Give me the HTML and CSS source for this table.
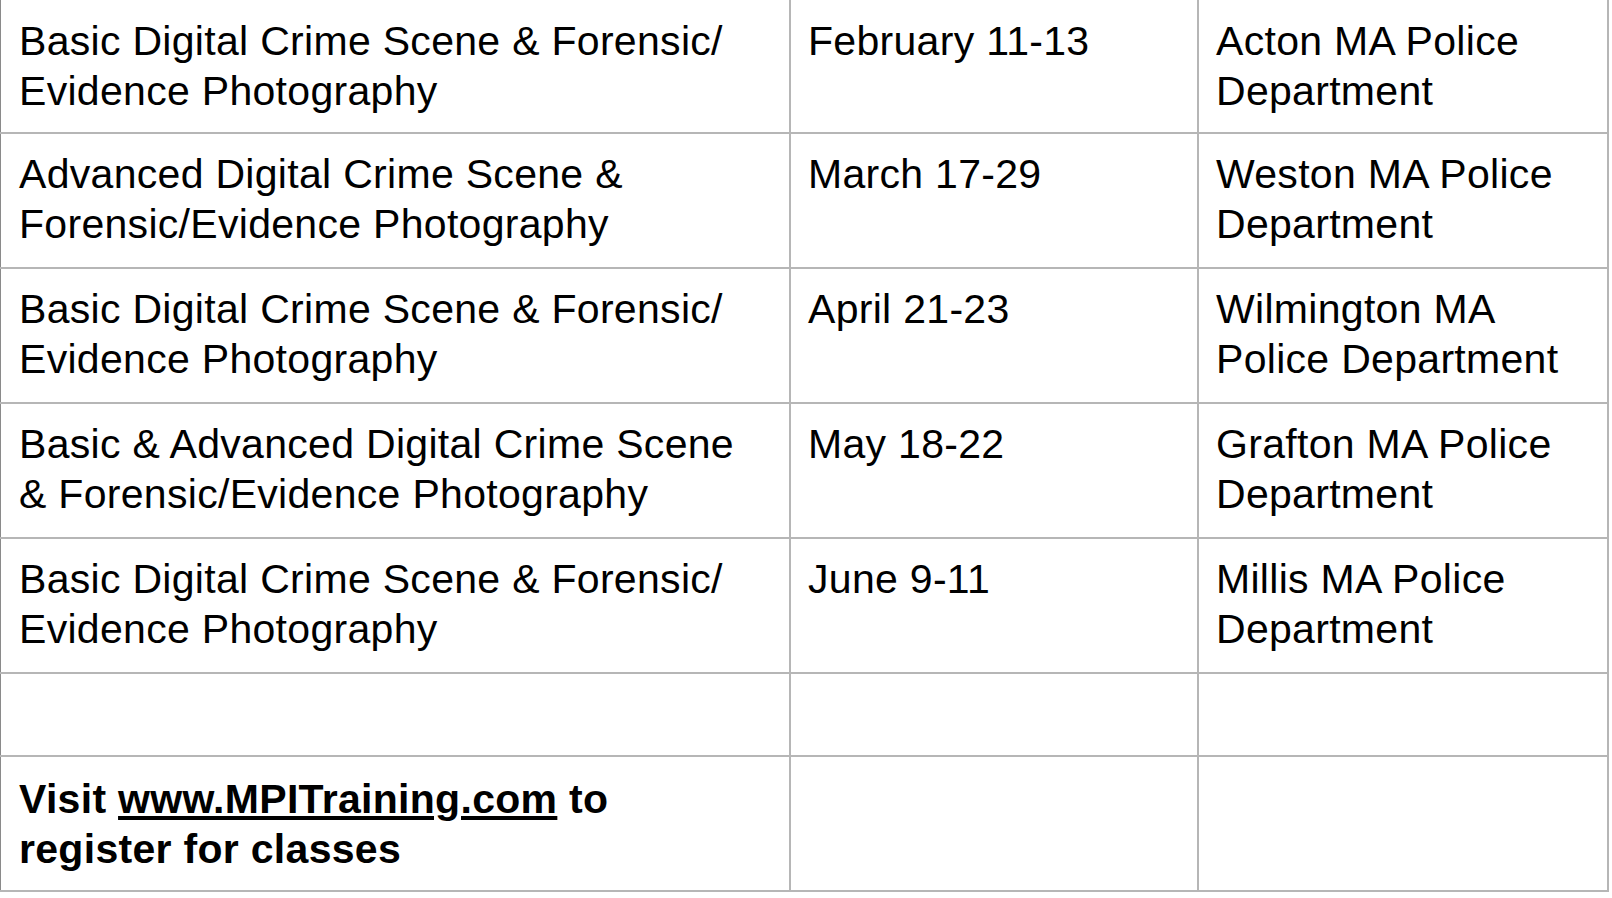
FILE: index.html
```html
<!DOCTYPE html>
<html>
<head>
<meta charset="utf-8">
<link rel="stylesheet" href="styles.css">
</head>
<body>
<table class="schedule">
  <colgroup>
    <col class="c-course">
    <col class="c-date">
    <col class="c-place">
  </colgroup>
  <tr class="first">
    <td>Basic Digital Crime Scene &amp; Forensic/ Evidence Photography</td>
    <td>February 11-13</td>
    <td>Acton MA Police Department</td>
  </tr>
  <tr>
    <td>Advanced Digital Crime Scene &amp; Forensic/Evidence Photography</td>
    <td>March 17-29</td>
    <td>Weston MA Police Department</td>
  </tr>
  <tr>
    <td>Basic Digital Crime Scene &amp; Forensic/ Evidence Photography</td>
    <td>April 21-23</td>
    <td>Wilmington MA Police Department</td>
  </tr>
  <tr>
    <td>Basic &amp; Advanced Digital Crime Scene &amp; Forensic/Evidence Photography</td>
    <td>May 18-22</td>
    <td>Grafton MA Police Department</td>
  </tr>
  <tr>
    <td>Basic Digital Crime Scene &amp; Forensic/ Evidence Photography</td>
    <td>June 9-11</td>
    <td>Millis MA Police Department</td>
  </tr>
  <tr class="empty">
    <td>&nbsp;</td>
    <td>&nbsp;</td>
    <td>&nbsp;</td>
  </tr>
  <tr class="cta">
    <td><strong>Visit <a href="#">www.MPITraining.com</a> to register for classes</strong></td>
    <td>&nbsp;</td>
    <td>&nbsp;</td>
  </tr>
</table>
</body>
</html>
```

FILE: styles.css
```css
html, body {
  margin: 0;
  padding: 0;
  background: #ffffff;
}

body {
  font-family: "Liberation Sans", Arial, Helvetica, sans-serif;
  color: #000000;
  overflow: hidden;
}

.schedule {
  border-collapse: collapse;
  table-layout: fixed;
  width: 1610px;
  margin: -2px 0 0 -1px;
}

.c-course { width: 790px; }
.c-date { width: 408px; }
.c-place { width: 410px; }

.schedule td {
  border: 2px solid #b6b6b6;
  vertical-align: top;
  font-size: 41px;
  letter-spacing: 0.3px;
  line-height: 50px;
  padding: 15px 18px 18px 17px;
}

.schedule td:first-child {
  border-left-color: #8a8a8a;
  padding-left: 18px;
  padding-right: 37px;
}

.schedule .first td {
  padding-top: 16px;
  padding-bottom: 16px;
}

.schedule .empty td {
  padding-top: 15px;
  padding-bottom: 16px;
}

.schedule .cta td {
  padding-top: 17px;
  padding-bottom: 16px;
}

.schedule strong {
  font-weight: bold;
}

.schedule a {
  color: #000000;
  text-decoration: underline;
}
```
